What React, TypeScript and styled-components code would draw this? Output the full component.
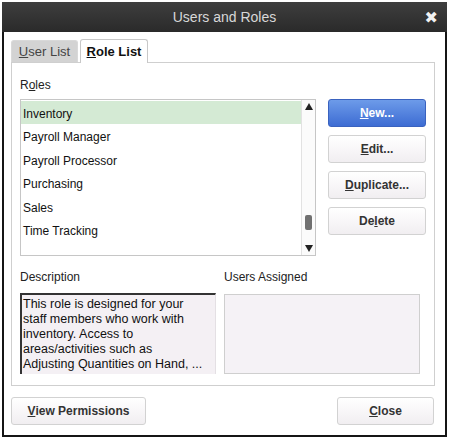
import React from 'react'
import styled, { createGlobalStyle } from 'styled-components'

const Global = createGlobalStyle`
  html, body {
    margin: 0;
    padding: 0;
    background: #ffffff;
  }
  body {
    font-family: 'Liberation Sans', Arial, sans-serif;
    font-size: 12px;
    color: #222;
  }
`

const Window = styled.div`
  margin: 2px 0 0 2px;
  width: 445px;
  height: 435px;
  box-sizing: border-box;
  border: 2px solid #151515;
  border-top: none;
  background: #fff;
  display: flex;
  flex-direction: column;
`

const TitleBar = styled.div`
  position: relative;
  height: 30px;
  flex: none;
  background: linear-gradient(#3e3e3e, #2a2a2a);
  color: #d8d8d8;
  font-size: 14px;
  display: flex;
  align-items: center;
  justify-content: center;
  margin: 0 -2px;
`

const CloseX = styled.span`
  position: absolute;
  right: 9px;
  top: 6px;
  color: #f2f2f2;
  font-size: 16px;
  font-weight: bold;
  font-family: 'DejaVu Sans', sans-serif;
`

const Body = styled.div`
  flex: 1;
  display: flex;
  flex-direction: column;
  padding: 7px 10px 0 7px;
`

const Tabs = styled.div`
  display: flex;
  align-items: flex-end;
  gap: 2px;
  height: 23px;
  position: relative;
  z-index: 1;
`

const Tab = styled.div<{ $active?: boolean }>`
  box-sizing: border-box;
  width: ${p => (p.$active ? '68px' : '67px')};
  height: ${p => (p.$active ? '24px' : '22px')};
  margin-bottom: ${p => (p.$active ? '-1px' : '0')};
  display: flex;
  align-items: center;
  justify-content: center;
  font-size: 13px;
  font-weight: ${p => (p.$active ? 'bold' : 'normal')};
  color: ${p => (p.$active ? '#111' : '#444')};
  background: ${p => (p.$active ? '#fff' : '#d3d3d3')};
  border: 1px solid ${p => (p.$active ? '#c8c8c8' : '#d9d9d9')};
  border-bottom: none;
  border-radius: 3px 3px 0 0;
`

const Panel = styled.div`
  box-sizing: border-box;
  width: 424px;
  height: 324px;
  border: 1px solid #cfcfcf;
  padding: 14px 8px 0 8px;
  display: flex;
  flex-direction: column;
`

const Label = styled.div`
  font-size: 12px;
  color: #222;
  height: 16px;
  line-height: 16px;
`

const RolesRow = styled.div`
  display: flex;
  gap: 12px;
  margin-top: 6px;
`

const ListBox = styled.div`
  box-sizing: border-box;
  width: 296px;
  height: 157px;
  border: 1px solid #c6c6c6;
  display: flex;
  background: #fff;
`

const Items = styled.div`
  flex: 1;
  display: flex;
  flex-direction: column;
  padding-top: 1px;
`

const Item = styled.div<{ $selected?: boolean }>`
  box-sizing: border-box;
  height: 23.4px;
  line-height: 23.4px;
  padding: 2px 0 0 2px;
  font-size: 12px;
  color: #111;
  background: ${p => (p.$selected ? '#d4ead4' : 'transparent')};
`

const ScrollBar = styled.div`
  position: relative;
  width: 13px;
  border-left: 1px solid #e2e2e2;
  background: #fbfbfb;
`

const Arrow = styled.div<{ $down?: boolean }>`
  position: absolute;
  left: 3px;
  ${p => (p.$down ? 'bottom: 3px;' : 'top: 3px;')}
  width: 0;
  height: 0;
  border-left: 4px solid transparent;
  border-right: 4px solid transparent;
  ${p => (p.$down ? 'border-top: 7px solid #222;' : 'border-bottom: 7px solid #222;')}
`

const Thumb = styled.div`
  position: absolute;
  left: 3px;
  top: 115px;
  width: 7px;
  height: 15px;
  border-radius: 2px;
  background: #707070;
`

const ButtonCol = styled.div`
  display: flex;
  flex-direction: column;
  gap: 8px;
`

const Button = styled.button<{ $primary?: boolean; $w?: number; $h?: number }>`
  box-sizing: border-box;
  width: ${p => p.$w ?? 98}px;
  height: ${p => p.$h ?? 28}px;
  padding: 0;
  font-family: 'Liberation Sans', Arial, sans-serif;
  font-size: 12px;
  font-weight: bold;
  border-radius: 3px;
  cursor: pointer;
  color: ${p => (p.$primary ? '#fff' : '#333')};
  border: 1px solid ${p => (p.$primary ? '#3a62bf' : '#d2d2d2')};
  background: ${p =>
    p.$primary
      ? 'linear-gradient(#6d9be9, #3d6cd3)'
      : 'linear-gradient(#ffffff, #f1eef1)'};
`

const InfoRow = styled.div`
  display: flex;
  gap: 8px;
  margin-top: 13px;
`

const InfoCol = styled.div`
  display: flex;
  flex-direction: column;
  gap: 8px;
`

const DescBox = styled.div`
  box-sizing: border-box;
  width: 196px;
  height: 81px;
  background: #f4f0f4;
  border-top: 2px solid #333;
  border-left: 2px solid #333;
  border-right: 1px solid #e4e0e4;
  padding: 2px 2px 0 1px;
  font-size: 12.5px;
  line-height: 15px;
  color: #111;
  white-space: nowrap;
  overflow: hidden;
`

const UsersBox = styled.div`
  box-sizing: border-box;
  width: 196px;
  height: 80px;
  margin-top: 1px;
  background: #f5f2f6;
  border: 1px solid #cfcfcf;
`

const Footer = styled.div`
  display: flex;
  justify-content: space-between;
  margin-top: 11px;
  width: 423px;
`

const roles = [
  'Inventory',
  'Payroll Manager',
  'Payroll Processor',
  'Purchasing',
  'Sales',
  'Time Tracking',
]

export default function App() {
  return (
    <>
      <Global />
      <Window>
        <TitleBar>
          Users and Roles
          <CloseX>✖</CloseX>
        </TitleBar>
        <Body>
          <Tabs>
            <Tab>
              <span>
                <u>U</u>ser List
              </span>
            </Tab>
            <Tab $active>
              <span>
                <u>R</u>ole List
              </span>
            </Tab>
          </Tabs>
          <Panel>
            <Label>
              R<u>o</u>les
            </Label>
            <RolesRow>
              <ListBox>
                <Items>
                  {roles.map((r, i) => (
                    <Item key={r} $selected={i === 0}>
                      {r}
                    </Item>
                  ))}
                </Items>
                <ScrollBar>
                  <Arrow />
                  <Thumb />
                  <Arrow $down />
                </ScrollBar>
              </ListBox>
              <ButtonCol>
                <Button $primary>
                  <u>N</u>ew...
                </Button>
                <Button>
                  <u>E</u>dit...
                </Button>
                <Button>
                  <u>D</u>uplicate...
                </Button>
                <Button>
                  De<u>l</u>ete
                </Button>
              </ButtonCol>
            </RolesRow>
            <InfoRow>
              <InfoCol>
                <Label>Description</Label>
                <DescBox>
                  This role is designed for your
                  <br />
                  staff members who work with
                  <br />
                  inventory. Access to
                  <br />
                  areas/activities such as
                  <br />
                  Adjusting Quantities on Hand, ...
                </DescBox>
              </InfoCol>
              <InfoCol>
                <Label>Users Assigned</Label>
                <UsersBox />
              </InfoCol>
            </InfoRow>
          </Panel>
          <Footer>
            <Button $w={135}>
              <u>V</u>iew Permissions
            </Button>
            <Button $w={97}>
              <u>C</u>lose
            </Button>
          </Footer>
        </Body>
      </Window>
    </>
  )
}
